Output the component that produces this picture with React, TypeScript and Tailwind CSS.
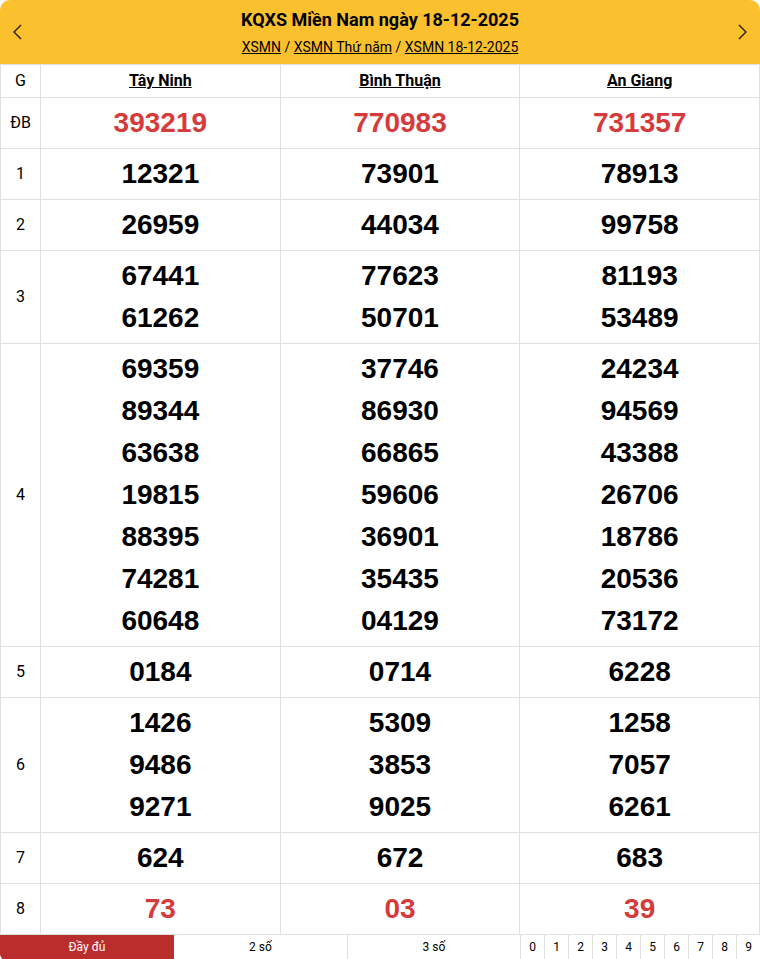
const provinces = ["Tây Ninh", "Bình Thuận", "An Giang"];

const prizes: { label: string; red?: boolean; values: string[][] }[] = [
  { label: "ĐB", red: true, values: [["393219"], ["770983"], ["731357"]] },
  { label: "1", values: [["12321"], ["73901"], ["78913"]] },
  { label: "2", values: [["26959"], ["44034"], ["99758"]] },
  { label: "3", values: [["67441", "61262"], ["77623", "50701"], ["81193", "53489"]] },
  {
    label: "4",
    values: [
      ["69359", "89344", "63638", "19815", "88395", "74281", "60648"],
      ["37746", "86930", "66865", "59606", "36901", "35435", "04129"],
      ["24234", "94569", "43388", "26706", "18786", "20536", "73172"],
    ],
  },
  { label: "5", values: [["0184"], ["0714"], ["6228"]] },
  { label: "6", values: [["1426", "9486", "9271"], ["5309", "3853", "9025"], ["1258", "7057", "6261"]] },
  { label: "7", values: [["624"], ["672"], ["683"]] },
  { label: "8", red: true, values: [["73"], ["03"], ["39"]] },
];

function Chevron({ dir }: { dir: "left" | "right" }) {
  return (
    <svg width="12" height="20" viewBox="0 0 12 20" fill="none" stroke="#222" strokeWidth="1.4">
      {dir === "left" ? <polyline points="9,3 2,10 9,17" /> : <polyline points="3,3 10,10 3,17" />}
    </svg>
  );
}

export default function App() {
  return (
    <div className="w-[760px] bg-white text-black" style={{ fontFamily: "Roboto, 'Liberation Sans', sans-serif" }}>
      <div className="flex h-16 items-center justify-between rounded-t-[10px] bg-[#fbc02d] px-3">
        <button className="flex h-10 w-3 items-center">
          <Chevron dir="left" />
        </button>
        <div className="flex flex-col items-center pt-[1px]">
          <h1 className="text-[18px] font-bold leading-6">KQXS Miền Nam ngày 18-12-2025</h1>
          <div className="mt-[5px] text-[14px] leading-5">
            <a className="underline">XSMN</a> / <a className="underline">XSMN Thứ năm</a> /{" "}
            <a className="underline">XSMN 18-12-2025</a>
          </div>
        </div>
        <button className="flex h-10 w-3 items-center">
          <Chevron dir="right" />
        </button>
      </div>

      <table className="w-full table-fixed border-collapse">
        <colgroup>
          <col className="w-[40px]" />
          <col />
          <col />
          <col />
        </colgroup>
        <thead>
          <tr>
            <th className="border border-[#e0e0e0] py-1 text-[16px] font-normal leading-6">G</th>
            {provinces.map((p) => (
              <th key={p} className="border border-[#e0e0e0] py-1 text-[16px] font-bold leading-6">
                <a className="underline">{p}</a>
              </th>
            ))}
          </tr>
        </thead>
        <tbody>
          {prizes.map((row) => (
            <tr key={row.label}>
              <td className="border border-[#e0e0e0] py-1 text-center text-[16px]">{row.label}</td>
              {row.values.map((nums, i) => (
                <td key={i} className="border border-[#e0e0e0] py-1 text-center">
                  {nums.map((n, j) => (
                    <div
                      key={j}
                      className={`text-[28px] font-bold leading-[42px] ${row.red ? "text-[#d63b3b]" : "text-black"}`}
                      style={{ fontFamily: "'Liberation Sans', Arial, sans-serif" }}
                    >
                      {n}
                    </div>
                  ))}
                </td>
              ))}
            </tr>
          ))}
        </tbody>
      </table>

      <div className="flex h-[25px] text-[12px] leading-[25px]">
        <div className="w-[174px] rounded-bl-[6px] bg-[#b92d2d] text-center text-white">Đầy đủ</div>
        <div className="w-[174px] border-r border-[#e0e0e0] text-center">2 số</div>
        <div className="w-[173px] border-r border-[#e0e0e0] text-center">3 số</div>
        <div className="flex flex-1">
          {["0", "1", "2", "3", "4", "5", "6", "7", "8", "9"].map((d, i) => (
            <div key={d} className={`flex-1 text-center ${i < 9 ? "border-r border-[#e0e0e0]" : ""}`}>
              {d}
            </div>
          ))}
        </div>
      </div>
    </div>
  );
}
